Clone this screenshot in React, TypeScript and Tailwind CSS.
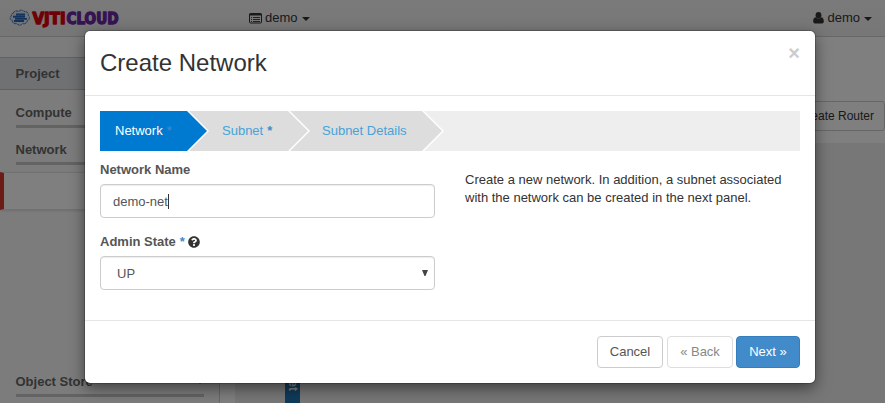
import { FaQuestionCircle } from "react-icons/fa";

function Caret({ color = "border-t-[#333]", className = "" }: { color?: string; className?: string }) {
  return (
    <span
      className={`inline-block h-0 w-0 border-x-4 border-t-4 border-x-transparent ${color} ${className}`}
    />
  );
}

function Logo() {
  return (
    <svg width="116" height="28" viewBox="0 -4 116 28" className="shrink-0 overflow-visible">
      <path
        d="M5 5.5 C6 2.5 9 2.500 10.500 3.500 C12.500 1.500 15 2 16 3.500 C19 3 21 5.500 20 7 C22.500 9 21.500 12 19.500 12.500 C19 15.500 16 16.500 14.500 15.500 C13 18 9.500 17.500 9 15.500 C6 16.500 4 14.500 4.500 12.500 C1.500 12 1.500 8.500 3.500 8 C2.800 7 3.500 5.500 5 5.500Z"
        fill="#dfe6ee"
        stroke="#3f78c0"
        strokeWidth="1"
        strokeDasharray="3 0.600"
      />
      <path
        d="M8 6.500H17M5 8.700H17M7 10.900H19M6 13H16"
        stroke="#2867b8"
        strokeWidth="1.900"
      />
      <g
        fontFamily="'DejaVu Sans Condensed', 'DejaVu Sans', sans-serif"
        fontWeight="700"
        fontSize="15.500"
        strokeWidth="1.300"
        strokeLinejoin="round"
      >
        <text x="24.500" y="15.500" textLength="33" lengthAdjust="spacingAndGlyphs" fill="#e00010" stroke="#e00010">
          VJTI
        </text>
        <text x="58.500" y="15.500" textLength="52" lengthAdjust="spacingAndGlyphs" fill="#6c28a4" stroke="#6c28a4">
          CLOUD
        </text>
      </g>
    </svg>
  );
}

function Topbar() {
  return (
    <header className="flex h-[37px] shrink-0 items-center border-b border-[#cfcfcf] bg-gradient-to-b from-[#f5f5f5] to-[#eeeeee] text-[#333] shadow-[0_1px_3px_rgba(0,0,0,0.15)]">
      <div className="flex w-[249px] pl-[8px]">
        <Logo />
      </div>
      <div className="flex flex-1 items-center">
        <svg width="13" height="11" viewBox="0 0 13 11" className="mr-[3px]">
          <rect x="0.500" y="0.500" width="12" height="9.500" rx="1" fill="none" stroke="#333" />
          <path d="M0.500 1.500H12.500" stroke="#333" strokeWidth="2" />
          <path d="M2 4.500H3M4 4.500H11M2 6.500H3M4 6.500H11M2 8.500H3M4 8.500H11" stroke="#444" />
        </svg>
        <span>demo</span>
        <Caret className="ml-1 mt-[2px]" />
      </div>
      <div className="flex items-center pr-[13px]">
        <svg width="11" height="12" viewBox="0 0 11 12" className="mr-[3px]" fill="#333">
          <ellipse cx="5.500" cy="3.200" rx="2.900" ry="3.200" />
          <path d="M2.500 5.300C0.600 5.600 0.200 7.500 0.200 9.500C0.200 10.800 1 11.500 2 11.500H9C10 11.500 10.800 10.800 10.800 9.500C10.800 7.500 10.400 5.600 8.500 5.300C6.700 7 4.300 7 2.500 5.300Z" />
        </svg>
        <span>demo</span>
        <Caret className="ml-1 mt-[2px]" />
      </div>
    </header>
  );
}

function SidebarGroup({ label }: { label: string }) {
  return (
    <div className="mx-[15.500px] h-[37px] border-b-[3px] border-[#c6c6c6] pt-[13px] font-bold leading-[18px] text-[#666]">
      {label}
    </div>
  );
}

function Sidebar() {
  return (
    <aside className="flex w-[220px] shrink-0 flex-col border-r border-[#cfcfcf] bg-[#f9f9f9] pt-5">
      <div className="flex h-[33px] items-center border-y border-[#bfc3c8] bg-[#dfe3e6] pl-[15.500px] font-bold text-[#666]">
        Project
      </div>
      <div className="h-[38px] pt-px">
        <SidebarGroup label="Compute" />
      </div>
      <SidebarGroup label="Network" />
      <div className="mt-[7px] h-[38px] border-y border-l-4 border-y-[#e3e3e3] border-l-[#d8382a] bg-white shadow-[0_1px_2px_rgba(0,0,0,0.12)]" />
      <div className="relative mt-auto mb-[6px] flex h-[37px] flex-col">
        <div className="absolute right-[15px] top-[12px] flex">
          <Caret className="mt-[8px]" color="border-t-[#666]" />
        </div>
        <SidebarGroup label="Object Store" />
      </div>
    </aside>
  );
}

function Page() {
  return (
    <div className="flex h-full flex-col bg-white">
      <Topbar />
      <div className="flex min-h-0 flex-1">
        <Sidebar />
        <main className="flex flex-1 flex-col bg-white">
          <div className="flex justify-end pt-16">
            <button className="h-[30px] rounded-[3px] border border-[#ccc] px-[10px] text-[12px] text-[#333]">
              + Create Router
            </button>
          </div>
          <div className="ml-[15px] mt-3 flex flex-1 bg-[#efefef] pl-[50px]">
            <div className="flex w-[15px] flex-col items-center justify-end bg-[#1f77b4] pb-[12px] text-[12px] font-bold text-white">
              <span className="whitespace-nowrap leading-[15px] [writing-mode:vertical-rl]">demo-net</span>
            </div>
          </div>
        </main>
      </div>
    </div>
  );
}

function Step({ label, required, active, className }: { label: string; required?: boolean; active?: boolean; className: string }) {
  return (
    <li className={`relative flex h-10 items-center ${active ? "bg-[#0079d0] text-white" : "bg-[#ddd] text-[#46a3d8]"} ${className}`}>
      <span>{label}</span>
      {required && <span className={`ml-1 font-bold ${active ? "text-[#428bca]/80" : "text-[#428bca]"}`}>*</span>}
      <svg className="absolute left-full top-0" width="24" height="40" viewBox="0 0 24 40">
        <path d="M0 0H2L22 20L2 40H0Z" fill="white" />
        <path d="M0 0L20 20L0 40Z" fill={active ? "#0079d0" : "#dddddd"} />
      </svg>
    </li>
  );
}

function Modal() {
  return (
    <section className="absolute left-[85px] top-[31px] flex h-[352px] w-[730px] flex-col rounded-[5px] bg-white shadow-[0_0_0_1px_rgba(0,0,0,0.2),0_5px_15px_rgba(0,0,0,0.5)]">
      <header className="flex h-[65px] shrink-0 justify-between border-b border-[#e5e5e5] px-[15px] pt-[15px]">
        <h3 className="text-[24px] leading-[34px] text-[#333]">Create Network</h3>
        <button className="-mt-[3px] h-5 text-[20px] font-bold leading-5 text-[#ccc]">×</button>
      </header>
      <div className="flex-1 px-[15px] pt-[15px]">
        <ul className="flex bg-[#eee]">
          <Step label="Network" required active className="z-30 w-[87px] pl-[15px]" />
          <Step label="Subnet" required className="z-20 w-[100.500px] pl-[35px]" />
          <Step label="Subnet Details" className="z-10 w-[134.500px] pl-[34.500px]" />
        </ul>
        <div className="flex">
          <div className="w-[335px] text-[#555]">
            <label className="mt-[10px] block font-bold leading-[18px]">Network Name</label>
            <div className="mt-[5px] flex h-[34px] items-center rounded-[4px] border border-[#ccc] px-3 pt-px shadow-[inset_0_1px_1px_rgba(0,0,0,0.075)]">
              demo-net
              <span className="h-[15px] w-px bg-[#333]" />
            </div>
            <label className="mt-[15px] flex items-center font-bold leading-[18px]">
              Admin State
              <span className="ml-1 text-[#428bca]">*</span>
              <FaQuestionCircle className="ml-[3px] h-[12px] w-[12px] text-[#333]" />
            </label>
            <div className="mt-[5px] flex h-[34px] items-center justify-between rounded-[4px] border border-[#ccc] pl-4 pr-[6px] pt-px shadow-[inset_0_1px_1px_rgba(0,0,0,0.075)]">
              UP
              <svg width="6" height="6" viewBox="0 0 6 6" className="-mt-px">
                <path d="M0 0H6L3.500 6H2.500Z" fill="#444" />
              </svg>
            </div>
          </div>
          <p className="ml-[30px] w-[335px] pt-[20px] leading-[18px] text-[#333]">
            Create a new network. In addition, a subnet associated with the network can be created in the next panel.
          </p>
        </div>
      </div>
      <footer className="flex h-[63px] shrink-0 justify-end border-t border-[#e5e5e5] px-[15px] pt-[15px]">
        <button className="h-8 w-[66px] rounded-[4px] border border-[#ccc] text-[#555]">Cancel</button>
        <button className="ml-1 h-8 w-[66px] rounded-[4px] border border-[#ddd] text-[#888]">« Back</button>
        <button className="ml-[3px] h-8 w-16 rounded-[4px] border border-[#357ebd] bg-[#428bca] text-white">Next »</button>
      </footer>
    </section>
  );
}

export default function App() {
  return (
    <div className="relative h-[403px] w-[885px] overflow-hidden font-['Liberation_Sans',Arial,sans-serif] text-[13px] leading-[18px]">
      <Page />
      <div className="absolute inset-0 bg-black/50" />
      <Modal />
    </div>
  );
}
